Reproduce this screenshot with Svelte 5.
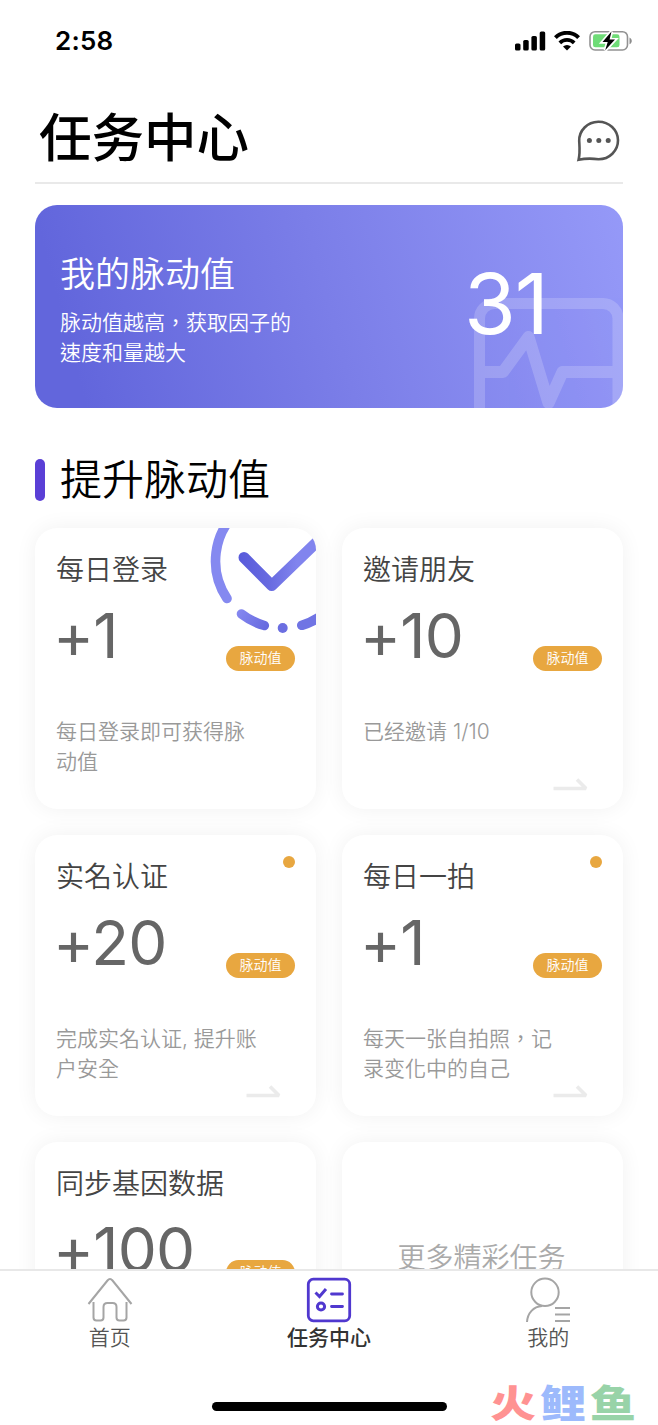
<script>
  const tasks = [
    { title: '每日登录', value: '+1', desc: '每日登录即可获得脉动值', done: true },
    { title: '邀请朋友', value: '+10', desc: '已经邀请 1/10', arrow: true },
    { title: '实名认证', value: '+20', desc: '完成实名认证, 提升账户安全', arrow: true, dot: true },
    { title: '每日一拍', value: '+1', desc: '每天一张自拍照，记录变化中的自己', arrow: true, dot: true },
    { title: '同步基因数据', value: '+100', desc: '', arrow: true }
  ];
</script>

<div class="screen">
  <div class="status">
    <span class="time">2:58</span>
    <div class="indicators">
      <svg width="31" height="20" viewBox="0 0 31 20">
        <rect x="0" y="12.5" width="5.5" height="7" rx="1.6" />
        <rect x="8.2" y="9" width="5.5" height="10.5" rx="1.6" />
        <rect x="16.4" y="5" width="5.5" height="14.5" rx="1.6" />
        <rect x="24.7" y="0.5" width="5.5" height="19" rx="1.6" />
      </svg>
      <svg class="wifi" width="26" height="20" viewBox="0 0 26 20">
        <path d="M1.4 6.600a16.4 16.4 0 0 1 23.2 0" fill="none" stroke="#000" stroke-width="4" />
        <path d="M5.8 11.800a10.200 10.200 0 0 1 14.400 0" fill="none" stroke="#000" stroke-width="3.800" />
        <path d="M13 19.6 9 15.6a6 6 0 0 1 8 0z" />
      </svg>
      <svg class="battery" width="44" height="22" viewBox="0 0 44 22">
        <rect x="1" y="1.7" width="37.5" height="18.3" rx="5" fill="#fff" stroke="#929292" stroke-width="1.6" />
        <path d="M40.5 7.5c3 1.4 3 5.4 0 6.8z" fill="#8c8c8c" />
        <rect x="4" y="4.3" width="26.5" height="13" rx="2.4" fill="#6fdc77" />
        <path d="M22.5 1.5 13.5 12h5.2l-2.5 8.3L26 9.6h-5.4z" stroke="#fff" stroke-width="3.4" />
        <path d="M22.5 1.5 13.5 12h5.2l-2.5 8.3L26 9.6h-5.4z" />
      </svg>
    </div>
  </div>

  <header>
    <h1>任务中心</h1>
    <svg width="44" height="44" viewBox="0 0 44 44">
      <path d="M2.6 39.8C4.200 33 3.600 28 3.200 21A19.400 18.800 0 1 1 22.600 39.300C15 38.200 9 38.400 2.600 39.800z" fill="none" stroke="#555" stroke-width="2.6" />
      <g fill="#555"><circle cx="13.400" cy="20.6" r="2.5" /><circle cx="22.8" cy="20.6" r="2.5" /><circle cx="32.2" cy="20.6" r="2.5" /></g>
    </svg>
  </header>

  <main>
    <section class="banner">
      <svg class="pulse" width="588" height="203" viewBox="0 0 588 203">
        <g opacity=".18" fill="none" stroke="#fff" stroke-width="11">
          <rect x="444.5" y="98.5" width="138.5" height="130" rx="15" />
          <path d="M450 167h18L493.500 132 513.500 198 527.500 167H578" stroke-width="12" stroke-linejoin="round" />
        </g>
      </svg>
      <div class="about">
        <h2>我的脉动值</h2>
        <p>脉动值越高，获取因子的速度和量越大</p>
      </div>
      <strong>31</strong>
    </section>

    <h3><i></i>提升脉动值</h3>

    <div class="grid">
      {#each tasks as task}
        <article>
          {#if task.done}
            <svg class="check" width="281" height="280" viewBox="0 0 281 280">
              <defs>
                <linearGradient id="tick" gradientUnits="userSpaceOnUse" x1="205" y1="30" x2="262" y2="30">
                  <stop offset="0" stop-color="#595bdb" />
                  <stop offset=".5" stop-color="#676ae0" />
                  <stop offset="1" stop-color="#8184ee" />
                </linearGradient>
                <linearGradient id="dash" gradientUnits="userSpaceOnUse" x1="205" y1="80" x2="232" y2="98">
                  <stop offset="0" stop-color="#8588f0" />
                  <stop offset="1" stop-color="#676adf" />
                </linearGradient>
              </defs>
              <g fill="none" stroke-width="9.600" stroke-linecap="round">
                <path d="M203 -17A67 67 0 0 0 192 70.500" stroke="#8589f0" />
                <path d="M206.500 86A67 67 0 0 0 229.300 97.500" stroke="url(#dash)" />
                <path d="M266.800 97.300A67 67 0 0 0 290 85" stroke="#7074e4" />
                <path d="M209 29.500 236.800 57.500 284 12" stroke="url(#tick)" stroke-width="11" stroke-linejoin="round" />
              </g>
              <circle cx="247.700" cy="100" r="5" fill="#6b6ee1" />
            </svg>
          {/if}
          {#if task.dot}<b class="dot"></b>{/if}
          <h4>{task.title}</h4>
          <div class="reward">
            <span class="value">{task.value}</span>
            <span class="badge">脉动值</span>
          </div>
          <p>{task.desc}</p>
          {#if task.arrow}
            <svg class="arrow" width="36" height="15" viewBox="0 0 36 15">
              <path d="M.5 12.500H33L24 3.500" fill="none" stroke="#ebebeb" stroke-width="3.600" stroke-linejoin="bevel" />
            </svg>
          {/if}
        </article>
      {/each}
      <article class="more">更多精彩任务</article>
    </div>
  </main>

  <nav>
    <a href="#home">
      <svg width="46" height="46" viewBox="0 0 46 46" fill="none" stroke="#a5a5a5" stroke-width="2">
        <path d="M1.500 27 20.500 3.500q2.500-3 5 0L44.500 27" />
        <path d="M6.500 25v15.500q0 3 3 3h4q3 0 3-3V30q0-4 4-4h5q4 0 4 4v10.500q0 3 3 3h4q3 0 3-3V25" />
      </svg>
      <span>首页</span>
    </a>
    <a href="#tasks" class="active">
      <svg width="46" height="46" viewBox="0 0 46 46" fill="none" stroke="#5038cf" stroke-width="2.800">
        <rect x="2.300" y="2.200" width="41.400" height="41.600" rx="5" />
        <path d="M9.500 15.500l4 4 6.500-7.500" stroke-width="3" />
        <path d="M25.500 17h11M25.500 29.500h11" stroke-linecap="round" />
        <circle cx="15" cy="29.500" r="3.600" stroke-width="3" />
      </svg>
      <span>任务中心</span>
    </a>
    <a href="#me">
      <svg width="46" height="46" viewBox="0 0 46 46" fill="none" stroke="#a5a5a5" stroke-width="2">
        <circle cx="20" cy="15.300" r="13.700" />
        <path d="M2 45C2.500 36 8.500 29.500 17 29M30 31h15M30 37.500h15M30 44h15" />
      </svg>
      <span>我的</span>
    </a>
    <div class="home-bar"></div>
    <div class="mark"><span>火</span><span>鲤</span><span>鱼</span></div>
  </nav>
</div>

<style>
  :global(body) {
    margin: 0;
    background: #fff;
  }
  .screen {
    width: 658px;
    height: 1425px;
    display: flex;
    flex-direction: column;
    overflow: hidden;
    background: #fff;
    font-family: Inter, 'Noto Sans CJK TC', sans-serif;
    font-weight: 350;
    color: #000;
  }
  h1, h2, h3, h4, p {
    margin: 0;
    font-weight: inherit;
  }
  .status {
    height: 82px;
    flex: none;
    display: flex;
    align-items: center;
    justify-content: space-between;
    padding: 0 25px 0 55px;
    box-sizing: border-box;
  }
  .time {
    font-size: 26px;
    font-weight: 600;
    letter-spacing: 0.2px;
    padding-bottom: 2px;
  }
  .indicators {
    display: flex;
    align-items: center;
  }
  .wifi {
    margin-left: 8px;
  }
  .battery {
    margin-left: 9px;
  }
  header {
    height: 102px;
    flex: none;
    box-sizing: border-box;
    margin: 0 35px;
    padding: 18px 3px 0 4px;
    border-bottom: 2px solid #e9e9e9;
    display: flex;
    justify-content: space-between;
  }
  header svg {
    margin-top: 20px;
  }
  h1 {
    font-size: 52.5px;
    line-height: 76px;
    font-weight: 500;
  }
  main {
    flex: 1;
    min-height: 0;
    overflow: hidden;
    padding: 21px 35px 0;
  }
  .banner {
    position: relative;
    height: 203px;
    border-radius: 22px;
    overflow: hidden;
    background: linear-gradient(75deg, #6266dc 8%, #7b7ee8 50%, #9599f8 100%);
    color: #fff;
    display: flex;
    justify-content: space-between;
    padding: 0 75px 0 25px;
    box-sizing: border-box;
  }
  .pulse {
    position: absolute;
    inset: 0;
  }
  .about {
    width: 236px;
    padding-top: 44px;
  }
  h2 {
    font-size: 35px;
    line-height: 50px;
  }
  .about p {
    font-size: 21px;
    line-height: 30px;
    margin-top: 9px;
  }
  strong {
    position: relative;
    font-weight: 400;
    font-size: 84px;
    line-height: 100px;
    letter-spacing: -1px;
    margin-top: 49px;
  }
  h3 {
    display: flex;
    align-items: center;
    gap: 15px;
    height: 60px;
    margin: 42px 0 18px;
    font-size: 42px;
    line-height: 60px;
  }
  h3 i {
    width: 10px;
    height: 42px;
    border-radius: 5px;
    background: #5a3fd6;
  }
  .grid {
    display: grid;
    grid-template-columns: 281px 281px;
    grid-auto-rows: 281px;
    gap: 26px;
  }
  article {
    position: relative;
    overflow: hidden;
    box-sizing: border-box;
    padding: 22px 21px 0;
    border-radius: 22px;
    background: #fff;
    box-shadow: 0 0 22px rgba(0, 0, 0, 0.06);
  }
  .check {
    position: absolute;
    left: 0;
    top: 0;
  }
  .dot {
    position: absolute;
    right: 21px;
    top: 21px;
    width: 12px;
    height: 12px;
    border-radius: 50%;
    background: #e8a740;
  }
  h4 {
    font-size: 28px;
    line-height: 40px;
    color: #444;
  }
  .reward {
    display: flex;
    justify-content: space-between;
    align-items: flex-start;
    margin-top: 16px;
  }
  .value {
    margin-left: -3px;
    font-size: 62px;
    line-height: 60px;
    font-weight: 400;
    color: #666;
    letter-spacing: -0.8px;
  }
  .badge {
    width: 69px;
    height: 25px;
    margin-top: 40px;
    border-radius: 13px;
    background: #e8a740;
    color: #fff;
    font-size: 14px;
    line-height: 24px;
    text-align: center;
  }
  article p {
    width: 204px;
    min-height: 60px;
    margin-top: 46px;
    font-size: 21px;
    line-height: 30px;
    color: #999;
  }
  .arrow {
    display: block;
    margin: -1px 13px 0 auto;
  }
  .more {
    padding: 96px 2px 0 0;
    text-align: center;
    font-size: 28px;
    line-height: 40px;
    color: #aaa;
  }
  nav {
    position: relative;
    flex: none;
    height: 156px;
    box-sizing: border-box;
    border-top: 2px solid #e8e8e8;
    background: #fff;
    display: grid;
    grid-template-columns: repeat(3, 1fr);
  }
  nav a {
    display: flex;
    flex-direction: column;
    align-items: center;
    padding-top: 6px;
    color: #555;
    text-decoration: none;
    font-size: 21px;
    line-height: 30px;
  }
  nav a.active {
    color: #333;
    font-weight: 500;
  }
  .home-bar {
    position: absolute;
    left: 212px;
    top: 131px;
    width: 235px;
    height: 9px;
    border-radius: 5px;
    background: #000;
  }
  .mark {
    position: absolute;
    left: 490px;
    top: 107px;
    display: flex;
    gap: 4px;
    font-family: 'Noto Sans CJK SC', sans-serif;
    font-size: 46px;
    line-height: 46px;
    font-weight: 900;
    transform: scaleY(0.82);
  }
  .mark span:nth-child(1) { color: #ff9292; }
  .mark span:nth-child(2) { color: #9dbafc; }
  .mark span:nth-child(3) { color: #98d3a8; }
</style>
